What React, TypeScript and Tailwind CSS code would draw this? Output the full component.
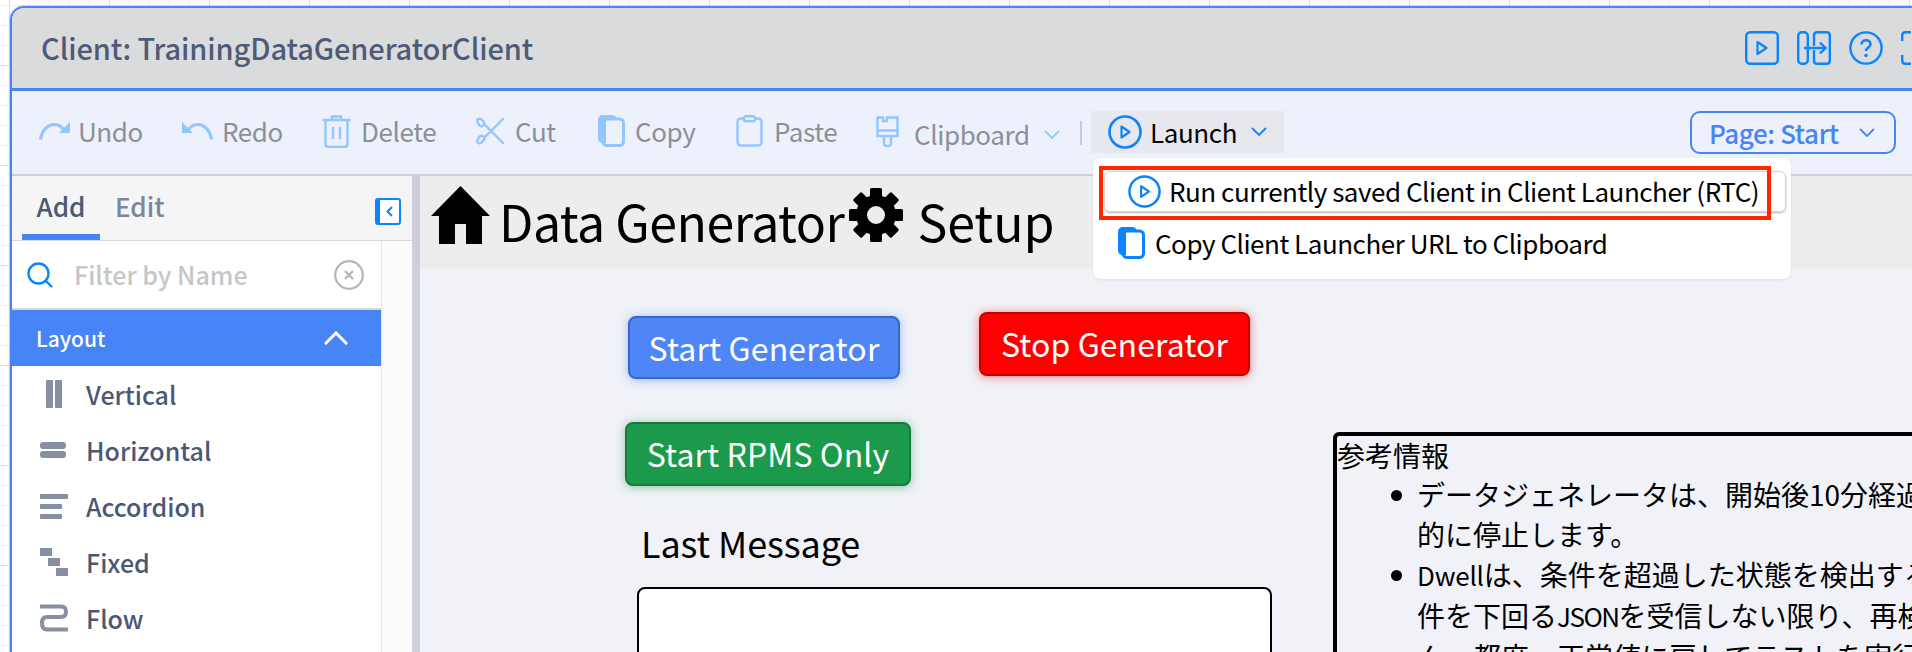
import React from "react";

const FONT = "font-['Noto_Sans_CJK_JP','Noto_Sans',sans-serif]";

type IconProps = { className?: string };

const UndoIcon: React.FC<IconProps> = ({ className }) => (
  <svg viewBox="0 0 31 18" className={className} fill="none">
    <path d="M1.5 17.5C3 8 9 2.5 15.5 2.5C19.5 2.5 22.5 4.5 25 8" stroke="currentColor" strokeWidth="3.2" />
    <path d="M31 0V11H20Z" fill="currentColor" />
  </svg>
);

const RedoIcon: React.FC<IconProps> = ({ className }) => (
  <svg viewBox="0 0 31 18" className={className} fill="none">
    <path d="M29.5 17.5C28 8 22 2.5 15.5 2.5C11.5 2.5 8.5 4.5 6 8" stroke="currentColor" strokeWidth="3.2" />
    <path d="M0 0V11H11Z" fill="currentColor" />
  </svg>
);

const TrashIcon: React.FC<IconProps> = ({ className }) => (
  <svg viewBox="0 0 29 34" className={className} fill="none" stroke="currentColor" strokeWidth="2.4">
    <path d="M0.5 6H28.5" />
    <path d="M10 6V2.5H19V6" />
    <path d="M3.5 6V30C3.5 31.8 4.7 33 6.5 33H22.5C24.3 33 25.5 31.8 25.5 30V6" />
    <path d="M11 13V25M18 13V25" />
  </svg>
);

const ScissorsIcon: React.FC<IconProps> = ({ className }) => (
  <svg viewBox="0 0 30 28" className={className} fill="none" stroke="currentColor" strokeWidth="2.4" strokeLinecap="round">
    <path d="M9 21L28 2" />
    <path d="M9 7L28 26" />
    <path d="M2 3.5C3 1.5 5 1 6.5 2.5L9 5C10 6.5 9.5 8 7.5 9C6 9.5 5 9 4 8Z" />
    <path d="M2 24.5C3 26.5 5 27 6.5 25.5L9 23C10 21.5 9.5 20 7.5 19C6 18.5 5 19 4 20Z" />
  </svg>
);

const CopyIcon: React.FC<IconProps> = ({ className }) => (
  <svg viewBox="0 0 27 32" className={className}>
    <path d="M5 0H14C17 0 18 1.5 19 4H8V28H5C2 28 0 26 0 23V5C0 2 2 0 5 0Z" fill="currentColor" />
    <rect x="5" y="4" width="20.5" height="26.5" rx="4" fill="none" stroke="currentColor" strokeWidth="3" />
  </svg>
);

const PasteIcon: React.FC<IconProps> = ({ className }) => (
  <svg viewBox="0 0 27 32" className={className} fill="none" stroke="currentColor" strokeWidth="2.4">
    <path d="M8 3.5H5C2.8 3.5 1.5 4.8 1.5 7V26.5C1.5 29 2.8 30.5 5 30.5H22C24.2 30.5 25.5 29 25.5 26.5V7C25.5 4.8 24.2 3.5 22 3.5H19" />
    <rect x="8" y="1.2" width="11" height="5" rx="2" />
  </svg>
);

const BrushIcon: React.FC<IconProps> = ({ className }) => (
  <svg viewBox="0 0 23 31" className={className} fill="none" stroke="currentColor" strokeWidth="2.4">
    <path d="M1.5 1.5H7V5H11V1.5H21.5V20H1.5Z" />
    <path d="M1.5 14.5H21.5" />
    <path d="M8 20V28C8 29.5 9.5 30 11.5 30C13.5 30 15 29.5 15 28V20" />
  </svg>
);

const Chevron: React.FC<IconProps> = ({ className }) => (
  <svg viewBox="0 0 16 9" className={className} fill="none" stroke="currentColor" strokeWidth="1.8">
    <path d="M1 1L8 8L15 1" />
  </svg>
);

const PlayCircle: React.FC<IconProps> = ({ className }) => (
  <svg viewBox="0 0 34 34" className={className} fill="none" stroke="#0a84ff">
    <circle cx="17" cy="17" r="15.5" strokeWidth="2.6" />
    <path d="M13.5 11.5L21.5 17L13.5 22.5Z" strokeWidth="2.2" strokeLinejoin="round" />
  </svg>
);

const PlaySquare: React.FC<IconProps> = ({ className }) => (
  <svg viewBox="0 0 34 34" className={className} fill="none" stroke="#0a84ff">
    <rect x="1.2" y="1.2" width="31.6" height="31.6" rx="4" strokeWidth="2.4" />
    <path d="M12.5 11L21.5 17L12.5 23Z" strokeWidth="2.2" strokeLinejoin="round" />
  </svg>
);

const SplitArrow: React.FC<IconProps> = ({ className }) => (
  <svg viewBox="0 0 34 34" className={className} fill="none" stroke="#0a84ff" strokeWidth="2.4">
    <rect x="1.2" y="1.2" width="9.6" height="31.6" rx="3.5" />
    <path d="M17 15V4.5C17 2.5 18 1.2 20 1.2H29.5C31.5 1.2 32.8 2.5 32.8 4.5V29.5C32.8 31.5 31.5 32.8 29.5 32.8H20C18 32.8 17 31.5 17 29.5V19" />
    <path d="M7 17H28" />
    <path d="M23 11.5L28.5 17L23 22.5" />
  </svg>
);

const HelpCircle: React.FC<IconProps> = ({ className }) => (
  <svg viewBox="0 0 34 34" className={className} fill="none" stroke="#0a84ff" strokeWidth="2.4">
    <circle cx="17" cy="17" r="15.6" />
    <path d="M12.5 13.5C12.5 10.8 14.5 9.3 17 9.3C19.5 9.3 21.5 10.8 21.5 13.2C21.5 16.5 17 16.5 17 20" strokeWidth="2.6" />
    <circle cx="17" cy="24.5" r="1.7" fill="#0a84ff" stroke="none" />
  </svg>
);

const FullscreenIcon: React.FC<IconProps> = ({ className }) => (
  <svg viewBox="0 0 34 34" className={className} fill="none" stroke="#0a84ff" strokeWidth="2.4">
    <path d="M1.2 10V4.5C1.2 2.5 2.5 1.2 4.5 1.2H10" />
    <path d="M1.2 24V29.5C1.2 31.5 2.5 32.8 4.5 32.8H10" />
    <path d="M24 1.2H29.5C31.5 1.2 32.8 2.5 32.8 4.5V10" />
    <path d="M24 32.8H29.5C31.5 32.8 32.8 31.5 32.8 29.5V24" />
  </svg>
);

const HomeIcon: React.FC<IconProps> = ({ className }) => (
  <svg viewBox="0 0 59 58" className={className}>
    <path d="M29.5 0L59 30H51V58H35V38H24V58H8V30H0Z" fill="currentColor" />
  </svg>
);

const GearIcon: React.FC<IconProps> = ({ className }) => (
  <svg viewBox="0 0 58 54" className={className}>
    <g transform="translate(29 27)" fill="currentColor">
      {[0, 45, 90, 135, 180, 225, 270, 315].map((deg) => (
        <rect key={deg} x="-6" y="-27" width="12" height="14" rx="1.5" transform={`rotate(${deg})`} />
      ))}
      <path
        fillRule="evenodd"
        d="M0 -20A20 20 0 1 1 0 20A20 20 0 1 1 0 -20ZM0 -9A9 9 0 1 0 0 9A9 9 0 1 0 0 -9Z"
      />
    </g>
  </svg>
);

const VerticalIcon = () => (
  <div className="flex w-[28px] justify-center gap-[2px]">
    <div className="h-[28px] w-[7px] rounded-[1px] bg-[#878fa3]" />
    <div className="h-[28px] w-[7px] rounded-[1px] bg-[#878fa3]" />
  </div>
);

const HorizontalIcon = () => (
  <div className="flex w-[28px] flex-col items-start gap-[2px]">
    <div className="h-[7px] w-[26px] rounded-[3px] bg-[#878fa3]" />
    <div className="h-[7px] w-[26px] rounded-[3px] bg-[#878fa3]" />
  </div>
);

const AccordionIcon = () => (
  <div className="flex w-[28px] flex-col gap-[5px]">
    <div className="h-[5px] w-[28px] rounded-[1px] bg-[#878fa3]" />
    <div className="h-[5px] w-[22px] rounded-[1px] bg-[#878fa3]" />
    <div className="h-[5px] w-[22px] rounded-[1px] bg-[#878fa3]" />
  </div>
);

const FixedIcon = () => (
  <svg viewBox="0 0 28 28" className="h-[28px] w-[28px]" fill="#878fa3">
    <rect x="0" y="0" width="12" height="8" />
    <rect x="8" y="10" width="12" height="8" />
    <rect x="16" y="20" width="12" height="8" />
  </svg>
);

const FlowIcon = () => (
  <svg viewBox="0 0 28 28" className="h-[28px] w-[28px]" fill="none" stroke="#878fa3" strokeWidth="4">
    <path d="M0 2.5H21C25 2.5 26 5 26 7.5C26 10 25 13 21 13H7C3.5 13 2 15.5 2 19C2 23 3.5 25.5 7 25.5H28" />
  </svg>
);

const ToolbarItem: React.FC<{
  icon: React.ReactNode;
  label: string;
  className: string;
}> = ({ icon, label, className }) => (
  <div className={`mb-[4px] flex shrink-0 items-center text-[#8c8f96] ${className}`}>
    <span className="flex text-[#93c6ff]">{icon}</span>
    <span className="text-[26px] leading-none tracking-[-0.4px]">{label}</span>
  </div>
);

const layoutItems = [
  { label: "Vertical", icon: <VerticalIcon /> },
  { label: "Horizontal", icon: <HorizontalIcon /> },
  { label: "Accordion", icon: <AccordionIcon /> },
  { label: "Fixed", icon: <FixedIcon /> },
  { label: "Flow", icon: <FlowIcon /> },
];

const Bullet = () => (
  <span className="ml-[54px] mr-[15px] mt-[16px] h-[11px] w-[11px] shrink-0 rounded-full bg-black" />
);

const App: React.FC = () => {
  return (
    <div
      className={`relative h-[652px] w-[1912px] overflow-hidden bg-white pl-[10px] pt-[6px] ${FONT} bg-[linear-gradient(to_right,#dcdcdc_1px,transparent_1px),linear-gradient(to_bottom,#dcdcdc_1px,transparent_1px),linear-gradient(to_right,#efefef_1px,transparent_1px),linear-gradient(to_bottom,#efefef_1px,transparent_1px)] [background-position:9px_65px,9px_65px,9px_5px,9px_5px] [background-size:100px_100px,100px_100px,20px_20px,20px_20px]`}
    >
      <div className="flex h-[700px] w-[2000px] flex-col overflow-hidden rounded-tl-[14px] border-2 border-[#4784f5] shadow-[0_0_2px_#9a9a9a]">
        {/* Header */}
        <div className="flex h-[83px] shrink-0 items-center justify-between border-b-[3px] border-[#4784f5] bg-[#dadbdd] pl-[29px]">
          <h1 className="mb-[2px] text-[29px] font-medium leading-none tracking-[-0.1px] text-[#4f5b76]">
            Client: TrainingDataGeneratorClient
          </h1>
          <div className="mr-[73px] flex items-center gap-[18px]">
            <PlaySquare className="h-[34px] w-[34px]" />
            <SplitArrow className="h-[34px] w-[34px]" />
            <HelpCircle className="h-[34px] w-[34px]" />
            <FullscreenIcon className="h-[34px] w-[34px]" />
          </div>
        </div>

        {/* Toolbar */}
        <div className="relative flex h-[85px] shrink-0 items-center border-b-[2px] border-[#cdd0d8] bg-[#edf1fb] pl-[27px]">
          <ToolbarItem className="w-[143px] gap-[8px]" label="Undo" icon={<UndoIcon className="h-[18px] w-[31px]" />} />
          <ToolbarItem className="w-[140px] gap-[9px]" label="Redo" icon={<RedoIcon className="h-[18px] w-[31px]" />} />
          <ToolbarItem className="w-[153px] gap-[10px]" label="Delete" icon={<TrashIcon className="h-[34px] w-[29px]" />} />
          <ToolbarItem className="w-[123px] gap-[10px]" label="Cut" icon={<ScissorsIcon className="h-[28px] w-[30px]" />} />
          <ToolbarItem className="w-[138px] gap-[10px]" label="Copy" icon={<CopyIcon className="h-[32px] w-[27px]" />} />
          <ToolbarItem className="w-[140px] gap-[11px]" label="Paste" icon={<PasteIcon className="h-[32px] w-[27px]" />} />
          <div className="flex w-[204px] shrink-0 items-center text-[#8c8f96]">
            <BrushIcon className="-mt-[2px] h-[31px] w-[23px] text-[#93c6ff]" />
            <span className="ml-[15px] mt-[3px] text-[26px] leading-none tracking-[-0.4px]">Clipboard</span>
            <Chevron className="ml-[14px] mt-[4px] h-[9px] w-[16px] text-[#93c6ff]" />
          </div>
          <div className="h-[24px] w-[2px] shrink-0 bg-[#c8ccd4]" />
          <div className="ml-[9px] mb-[2px] flex h-[42px] w-[193px] shrink-0 items-center bg-[#e6e8ee] pl-[17px] text-black">
            <PlayCircle className="h-[34px] w-[34px]" />
            <span className="ml-[8px] text-[26px] leading-none tracking-[-0.4px]">Launch</span>
            <Chevron className="ml-[14px] h-[9px] w-[16px] text-[#0a84ff]" />
          </div>
          <div className="ml-[406px] flex h-[43px] w-[206px] shrink-0 items-center rounded-[10px] border-2 border-[#4784f5] pl-[17px] text-[#4784f5]">
            <span className="text-[26px] font-medium leading-none tracking-[-0.4px]">Page: Start</span>
            <Chevron className="ml-[20px] h-[9px] w-[16px]" />
          </div>
        </div>

        {/* Body */}
        <div className="flex min-h-0 flex-1">
          <aside className="flex w-[400px] shrink-0 flex-col bg-[#f5f5f5]">
            <div className="relative flex h-[65px] shrink-0 items-start border-b border-[#d5d7da] pl-[10px]">
              <div className="flex h-full w-[78px] items-center justify-center border-b-[6px] border-[#4784f5] pt-[2px] text-[26px] font-medium leading-none text-[#4b5873]">
                Add
              </div>
              <div className="ml-[15px] flex h-full items-center pb-[4px] text-[26px] font-medium leading-none text-[#7d869c]">
                Edit
              </div>
              <div className="absolute left-[363px] top-[22px] flex h-[27px] w-[26px] items-center justify-center rounded-[3px] border-2 border-l-[5px] border-[#0a84ff] bg-white">
                <svg viewBox="0 0 7 11" className="h-[11px] w-[7px]" fill="none" stroke="#0a84ff" strokeWidth="2">
                  <path d="M6 1L1.5 5.5L6 10" />
                </svg>
              </div>
            </div>
            <div className="flex flex-1">
              <div className="w-[370px] shrink-0 border-r border-[#e5e5e5] bg-white">
                <div className="flex h-[69px] items-center border-b-2 border-[#d5d7da] pl-[15px]">
                  <svg viewBox="0 0 26 26" className="h-[26px] w-[26px]" fill="none" stroke="#0a84ff" strokeWidth="2.4">
                    <circle cx="11.5" cy="11.5" r="10" />
                    <path d="M18.5 18.5L25 25" />
                  </svg>
                  <span className="ml-[21px] w-[260px] text-[25px] font-medium leading-none text-[#c6c6c6]">
                    Filter by Name
                  </span>
                  <svg viewBox="0 0 30 30" className="h-[30px] w-[30px]" fill="none" stroke="#b5b5b5" strokeWidth="2.2">
                    <circle cx="15" cy="15" r="13.8" />
                    <path d="M11 11L19 19M19 11L11 19" />
                  </svg>
                </div>
                <div className="flex h-[56px] items-center justify-between bg-[#4784f5] pl-[24px] pr-[33px] text-white">
                  <span className="text-[21px] font-medium leading-none">Layout</span>
                  <svg viewBox="0 0 24 14" className="h-[14px] w-[24px]" fill="none" stroke="white" strokeWidth="3">
                    <path d="M1 13L12 2L23 13" />
                  </svg>
                </div>
                {layoutItems.map((item) => (
                  <div key={item.label} className="flex h-[56px] items-center pl-[28px]">
                    <span className="flex w-[46px] shrink-0">{item.icon}</span>
                    <span className="text-[25px] font-medium leading-none text-[#4b5873]">{item.label}</span>
                  </div>
                ))}
              </div>
              <div className="flex-1 bg-[#fbfbfb]" />
            </div>
          </aside>
          <div className="w-[8px] shrink-0 bg-[#cdd0d8]" />

          {/* Canvas */}
          <main className="relative flex-1 bg-[#f0f2f7] text-black">
            <div className="flex h-[92px] items-center bg-[#ededed] pl-[11px]">
              <HomeIcon className="mb-[14px] h-[58px] w-[59px]" />
              <span className="mb-[5px] ml-[9px] text-[50px] leading-none tracking-[-0.5px]">Data Generator</span>
              <GearIcon className="mb-[14px] ml-[3px] h-[54px] w-[58px]" />
              <span className="mb-[5px] ml-[12px] text-[50px] leading-none">Setup</span>
            </div>

            <button className="absolute left-[208px] top-[140px] flex h-[63px] w-[272px] items-center justify-center rounded-[8px] border-2 border-[#3b66c0] bg-[#4f86f7] pb-[2px] text-[32px] leading-none tracking-[0.15px] text-white shadow-[0_1px_10px_rgba(79,134,247,0.55)]">
              Start Generator
            </button>
            <button className="absolute left-[559px] top-[136px] flex h-[64px] w-[271px] items-center justify-center rounded-[8px] border-2 border-[#c40000] bg-[#ff0000] pb-[3px] text-[32px] leading-none tracking-[0.1px] text-white shadow-[0_1px_10px_rgba(255,0,0,0.5)]">
              Stop Generator
            </button>
            <button className="absolute left-[205px] top-[246px] flex h-[64px] w-[286px] items-center justify-center rounded-[8px] border-2 border-[#17793b] bg-[#1c9a4b] pb-[2px] text-[32px] leading-none tracking-[0.1px] text-white shadow-[0_1px_10px_rgba(28,154,75,0.5)]">
              Start RPMS Only
            </button>

            <div className="absolute left-[221px] top-[348px] text-[36px] leading-none tracking-[-0.1px]">Last Message</div>
            <div className="absolute left-[217px] top-[411px] h-[200px] w-[635px] rounded-[8px] border-2 border-black bg-white" />

            <div className="absolute left-[913px] top-[256px] h-[400px] w-[900px] rounded-[6px] border-[4px] border-black text-[28px] leading-[40px]">
              <div className="-mt-[1px]">参考情報</div>
              <ul className="-mt-[1px]">
                <li className="flex whitespace-nowrap">
                  <Bullet />
                  <div>
                    データジェネレータは、開始後10分経過すると自動
                    <br />
                    的に停止します。
                  </div>
                </li>
                <li className="flex whitespace-nowrap">
                  <Bullet />
                  <div>
                    <span className="text-[26px] tracking-[-0.2px]">Dwell</span>は、条件を超過した状態を検出すると、条
                    <br />
                    件を下回る<span className="text-[26px] tracking-[-1.5px]">JSON</span>を受信しない限り、再検出しませ
                    <br />
                    ん。都度、正常値に戻してテストを実行してください
                  </div>
                </li>
              </ul>
            </div>
          </main>
        </div>
      </div>

      {/* Launch dropdown */}
      <div className="absolute left-[1093px] top-[158px] h-[121px] w-[698px] rounded-[8px] bg-white shadow-[0_1px_3px_rgba(0,0,0,0.08)]">
        <div className="absolute left-[11px] top-[13px] flex h-[41px] w-[682px] items-center rounded-[6px] border border-[#d5d5d5] pl-[23px] text-[26px] leading-none tracking-[-0.47px] text-black shadow-[0_1px_2px_rgba(0,0,0,0.3)]">
          <PlayCircle className="h-[33px] w-[33px]" />
          <span className="mb-[1px] ml-[8px] whitespace-nowrap">Run currently saved Client in Client Launcher (RTC)</span>
        </div>
        <div className="absolute left-[25px] top-[69px] flex items-center text-[26px] leading-none tracking-[-0.47px] text-black">
          <CopyIcon className="h-[32px] w-[27px] text-[#0a84ff]" />
          <span className="ml-[10px] whitespace-nowrap">Copy Client Launcher URL to Clipboard</span>
        </div>
        {/* Red highlight drawn over the first menu item */}
        <div className="absolute left-[6px] top-[8px] h-[54px] w-[672px] border-[4px] border-[#ff2600]" />
      </div>
    </div>
  );
};

export default App;
